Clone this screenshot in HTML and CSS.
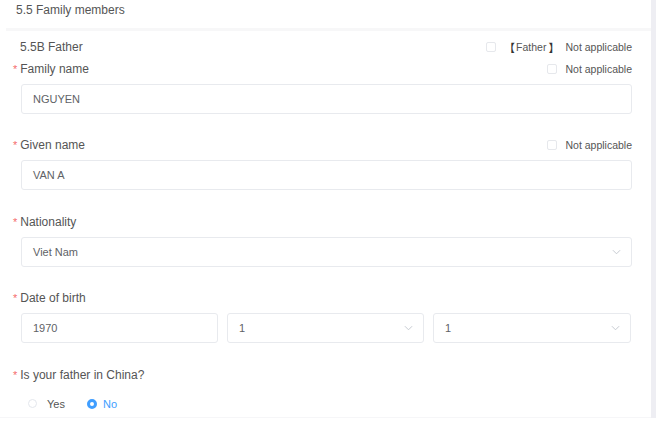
FILE: index.html
```html
<!DOCTYPE html>
<html>
<head>
<meta charset="utf-8">
<link rel="stylesheet" href="styles.css">
</head>
<body>
<div class="page">
  <main class="panel">
    <div class="section-title">5.5 Family members</div>
    <div class="band"></div>
    <form class="form">
      <div class="sub-row">
        <span class="sub-title">5.5B Father</span>
        <label class="check"><span class="box"></span><span class="bracket">【</span><span class="who">Father</span><span class="bracket">】</span>Not applicable</label>
      </div>

      <div class="item">
        <div class="label-row">
          <span class="label"><i class="req">*</i>Family name</span>
          <label class="check"><span class="box"></span>Not applicable</label>
        </div>
        <div class="control"><div class="input">NGUYEN</div></div>
      </div>

      <div class="item">
        <div class="label-row">
          <span class="label"><i class="req">*</i>Given name</span>
          <label class="check"><span class="box"></span>Not applicable</label>
        </div>
        <div class="control"><div class="input">VAN A</div></div>
      </div>

      <div class="item">
        <div class="label-row">
          <span class="label"><i class="req">*</i>Nationality</span>
        </div>
        <div class="control"><div class="input select">Viet Nam<svg class="chev" viewBox="0 0 10 6" width="9" height="6"><path d="M1 1l4 4 4-4" fill="none" stroke="#c0c4cc" stroke-width="1"/></svg></div></div>
      </div>

      <div class="item">
        <div class="label-row">
          <span class="label"><i class="req">*</i>Date of birth</span>
        </div>
        <div class="control dob">
          <div class="input">1970</div>
          <div class="input select">1<svg class="chev" viewBox="0 0 10 6" width="9" height="6"><path d="M1 1l4 4 4-4" fill="none" stroke="#c0c4cc" stroke-width="1"/></svg></div>
          <div class="input select">1<svg class="chev" viewBox="0 0 10 6" width="9" height="6"><path d="M1 1l4 4 4-4" fill="none" stroke="#c0c4cc" stroke-width="1"/></svg></div>
        </div>
      </div>

      <div class="item">
        <div class="label-row">
          <span class="label"><i class="req">*</i>Is your father in China?</span>
        </div>
        <div class="radios">
          <label class="radio"><span class="dot"></span>Yes</label>
          <label class="radio on"><span class="dot"></span>No</label>
        </div>
      </div>
    </form>
  </main>
  <div class="scroll"></div>
</div>
</body>
</html>
```

FILE: styles.css
```css
* { box-sizing: border-box; }
html, body { margin: 0; padding: 0; background: #fff; }
body {
  font-family: "Liberation Sans", Arial, "Noto Sans CJK SC", sans-serif;
  font-size: 12px;
  color: #606266;
}
.page {
  display: flex;
  height: 429px;
}
.panel {
  width: 651px;
  height: 418px;
  border-bottom: 1px solid #f6f6f8;
}
.scroll {
  width: 5px;
  height: 418px;
  background: #eeeef3;
}
.section-title {
  height: 28px;
  line-height: 20px;
  padding-left: 16px;
  color: #555;
  font-size: 12px;
}
.band {
  height: 3px;
  margin-left: 6px;
  background: #f7f7f8;
}
.form {
  padding: 6px 19px 0 13px;
}
.sub-row {
  display: flex;
  justify-content: space-between;
  align-items: center;
  height: 20px;
  padding-left: 7px;
}
.sub-title { color: #555; }
.check {
  display: flex;
  align-items: center;
  font-size: 10.5px;
  color: #555;
}
.box {
  width: 10px;
  height: 10px;
  border: 1px solid #e6e8ec;
  border-radius: 2px;
  margin-right: 8px;
}
.bracket {
  font-family: "Noto Sans CJK SC", sans-serif;
  font-size: 11px;
  color: #333;
}
.who { margin: 0 2px; }
.bracket + .who { margin-left: 1px; }
.who + .bracket { margin-right: 6px; }
.item { margin-top: 2px; }
.item + .item { margin-top: 21.4px; }
.label-row {
  display: flex;
  justify-content: space-between;
  align-items: center;
  height: 20px;
}
.label { color: #555; }
.req {
  font-style: normal;
  color: #f56c6c;
  margin-right: 3px;
  font-size: 11px;
}
.control {
  margin-top: 5px;
  padding-left: 8px;
}
.input {
  height: 30px;
  border: 1px solid #e8eaee;
  border-radius: 3px;
  display: flex;
  align-items: center;
  padding-left: 11px;
  padding-right: 10px;
  font-size: 11px;
  color: #606266;
}
.select { justify-content: space-between; }
.chev { display: block; }
.dob {
  display: grid;
  grid-template-columns: 197px 197px 198px;
  gap: 9px;
}
.radios {
  display: flex;
  align-items: center;
  height: 20px;
  margin-top: 9px;
  padding-left: 15px;
}
.radio {
  display: flex;
  align-items: center;
  font-size: 11px;
  color: #555;
  margin-right: 22px;
}
.radio .dot {
  width: 9px;
  height: 9px;
  border-radius: 50%;
  border: 1px solid #e4e7ed;
  margin-right: 10px;
}
.radio.on { color: #409eff; }
.radio.on .dot {
  width: 10px;
  height: 10px;
  border: 3px solid #409eff;
  background: #fff;
  margin-right: 6px;
}
```
